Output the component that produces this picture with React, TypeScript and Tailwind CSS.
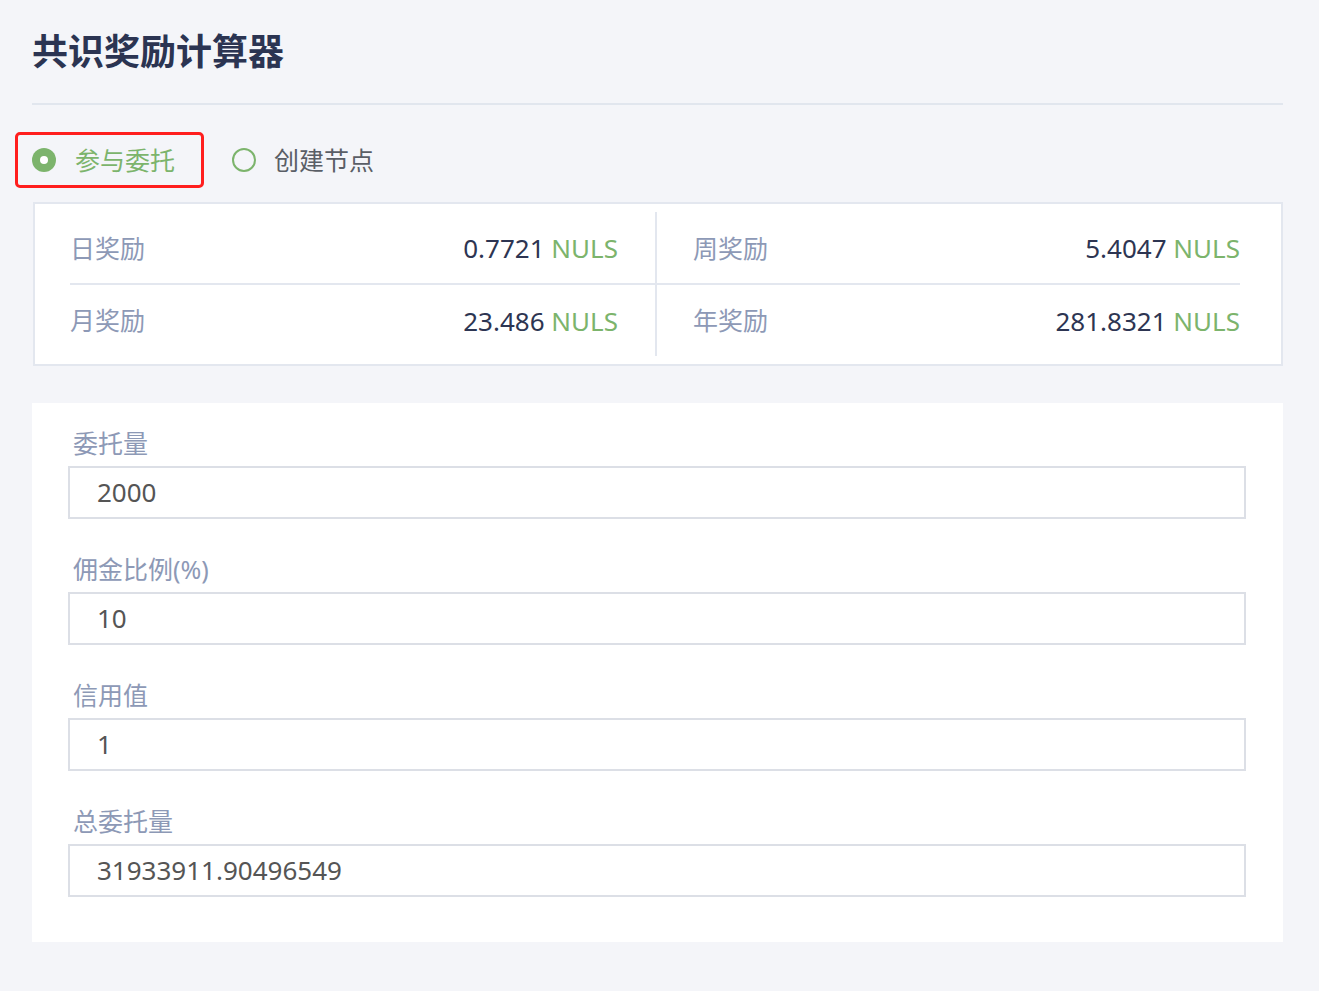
import React from "react";

const FONT = '"Noto Sans", "Noto Sans CJK SC", sans-serif';

function Field({ label, value }: { label: string; value: string }) {
  return (
    <div className="flex flex-col">
      <div className="h-[36px] flex items-center pl-[5px] text-[25px] text-[#8d99b6] mb-[4px]">{label}</div>
      <div className="h-[53px] border-2 border-[#dcdfe6] bg-white flex items-center pl-[27px] text-[26px] text-[#555555]">
        {value}
      </div>
    </div>
  );
}

function Cell({ label, value, right, top }: { label: string; value: string; right?: boolean; top?: boolean }) {
  return (
    <div
      className={`flex items-center justify-between ${top ? "h-[73px] border-b-2 pt-[2px]" : "h-[71px] pt-[1px]"} ${
        right ? "pl-[36px] border-l-2" : "pr-[37px]"
      } border-[#e3e7ef]`}
    >
      <span className="text-[25px] text-[#8d99b6]">{label}</span>
      <span className="text-[26px] text-[#2d3552]">
        {value} <span className="text-[#7cb46c]">NULS</span>
      </span>
    </div>
  );
}

export default function App() {
  return (
    <div className="min-h-[991px] w-full bg-[#f4f5f9] pl-[32px] pr-[36px] pt-[30px]" style={{ fontFamily: FONT }}>
      <h1 className="text-[36px] leading-[43px] font-bold text-[#2b3452]">共识奖励计算器</h1>
      <div className="mt-[30px] h-[2px] bg-[#e1e6ee]" />

      <div className="mt-[27px] flex items-center h-[56px]">
        <div className="-ml-[17px] h-[56px] flex items-center border-[3px] border-[#ff1e1e] rounded-[5px] pl-[14px] pr-[26px]">
          <span className="w-[24px] h-[24px] rounded-full bg-[#7cb46c] flex items-center justify-center">
            <span className="w-[8px] h-[8px] rounded-full bg-white" />
          </span>
          <span className="ml-[19px] text-[25px] text-[#7cb46c] leading-none">参与委托</span>
        </div>
        <div className="ml-[28px] flex items-center">
          <span className="w-[24px] h-[24px] rounded-full border-2 border-[#7cb46c]" />
          <span className="ml-[18px] text-[25px] text-[#5a5e66] leading-none">创建节点</span>
        </div>
      </div>

      <div className="mt-[14px] ml-[1px] w-[1250px] border-2 border-[#e3e7ef] bg-white pl-[35px] pr-[41px] pt-[8px] pb-[8px]">
        <div className="grid grid-cols-2">
          <Cell label="日奖励" value="0.7721" top />
          <Cell label="周奖励" value="5.4047" top right />
          <Cell label="月奖励" value="23.486" />
          <Cell label="年奖励" value="281.8321" right />
        </div>
      </div>

      <div className="mt-[37px] w-[1251px] bg-white pl-[36px] pr-[37px] pt-[23px] pb-[45px] flex flex-col gap-[33px]">
        <Field label="委托量" value="2000" />
        <Field label="佣金比例(%)" value="10" />
        <Field label="信用值" value="1" />
        <Field label="总委托量" value="31933911.90496549" />
      </div>
    </div>
  );
}
